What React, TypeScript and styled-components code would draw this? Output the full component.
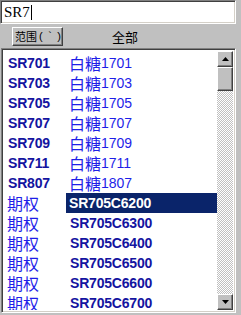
import React from 'react';
import styled, { createGlobalStyle, css } from 'styled-components';

const GlobalStyle = createGlobalStyle`
    html, body {
        margin: 0;
        padding: 0;
        background: #c0c0c0;
        overflow: hidden;
    }
`;

const sunken = css`
    box-sizing: border-box;
    border-style: solid;
    border-width: 1px;
    border-color: #808080 #ffffff #ffffff #808080;
    box-shadow: inset 1px 1px 0 #404040, inset -1px -1px 0 #d4d0c8;
`;

const raised = css`
    box-sizing: border-box;
    border-style: solid;
    border-width: 1px;
    border-color: #ffffff #404040 #404040 #ffffff;
    box-shadow: inset -1px -1px 0 #808080;
    background: #c0c0c0;
`;

const Window = styled.div`
    width: 241px;
    height: 315px;
    background: #c0c0c0;
    display: flex;
    flex-direction: column;
    overflow: hidden;
`;

const SearchBox = styled.div`
    ${sunken};
    width: 236px;
    height: 24px;
    background: #ffffff;
    padding: 0 0 0 3px;
    display: flex;
    align-items: center;
    font-family: "Liberation Serif", serif;
    font-size: 15px;
    color: #000000;
`;

const Caret = styled.span`
    display: inline-block;
    width: 1px;
    height: 15px;
    margin-left: 1px;
    background: #000000;
`;

const Toolbar = styled.div`
    height: 24px;
    display: flex;
    align-items: center;
`;

const RangeButton = styled.div`
    ${raised};
    margin: 1px 0 0 12px;
    width: 51px;
    height: 19px;
    display: flex;
    align-items: center;
    padding-left: 2px;
    white-space: nowrap;
    overflow: visible;
    font-family: "Noto Sans CJK SC", sans-serif;
    font-size: 11px;
    line-height: 1;
    color: #000000;
`;

const Paren = styled.span`
    font-family: "Liberation Sans", sans-serif;
    font-size: 11px;
    letter-spacing: 5.5px;
    margin-left: 2px;
`;

const AllLabel = styled.span`
    margin: 1px 0 0 49px;
    font-family: "Noto Sans CJK SC", sans-serif;
    font-size: 13px;
    color: #000000;
`;

const ListBox = styled.div`
    ${sunken};
    margin-left: 1px;
    width: 235px;
    height: 265px;
    background: #ffffff;
    display: flex;
    padding: 2px;
`;

const Rows = styled.div`
    flex: 1;
    padding-top: 2px;
    overflow: hidden;
`;

const Row = styled.div`
    display: flex;
    height: 20px;
`;

const Cell = styled.div<{ $wide?: boolean; $selected?: boolean }>`
    box-sizing: border-box;
    height: 20px;
    display: flex;
    align-items: center;
    white-space: nowrap;
    ${({ $wide }) => ($wide ? 'flex: 1; padding-left: 3px;' : 'width: 62px; padding-left: 3px;')}
    background: ${({ $selected }) => ($selected ? '#0a246a' : 'transparent')};
`;

const Code = styled.span<{ $selected?: boolean }>`
    margin-left: ${({ $selected }) => ($selected ? '0' : '1px')};
    font-family: "Liberation Sans", Arial, sans-serif;
    font-weight: bold;
    font-size: 14px;
    line-height: 16px;
    letter-spacing: -0.2px;
    color: ${({ $selected }) => ($selected ? '#ffffff' : '#1414a0')};
`;

const Cjk = styled.span`
    font-family: "Noto Sans CJK SC", sans-serif;
    font-size: 16px;
    line-height: 17px;
    color: #1e1ee8;
`;

const Num = styled.span`
    font-family: "Liberation Sans", Arial, sans-serif;
    font-size: 14px;
    line-height: 16px;
    color: #1e1ee8;
`;

const ScrollBar = styled.div`
    width: 16px;
    display: flex;
    flex-direction: column;
`;

const ArrowButton = styled.div`
    ${raised};
    width: 16px;
    height: 16px;
    display: flex;
    align-items: center;
    justify-content: center;
`;

const Thumb = styled.div`
    ${raised};
    width: 16px;
    height: 24px;
`;

const Track = styled.div`
    flex: 1;
    background: repeating-conic-gradient(#c0c0c0 0 25%, #ffffff 0 50%) 0 0 / 2px 2px;
`;

const Arrow = ({ down }: { down?: boolean }) => (
    <svg width="7" height="4" viewBox="0 0 7 4">
        <path d={down ? 'M0 0H7L3.5 4Z' : 'M3.5 0L7 4H0Z'} fill="#000000" />
    </svg>
);

type Item = {
    code: string;
    name?: string;
    num?: string;
    selected?: boolean;
};

const futures: Item[] = [
    { code: 'SR701', name: '白糖', num: '1701' },
    { code: 'SR703', name: '白糖', num: '1703' },
    { code: 'SR705', name: '白糖', num: '1705' },
    { code: 'SR707', name: '白糖', num: '1707' },
    { code: 'SR709', name: '白糖', num: '1709' },
    { code: 'SR711', name: '白糖', num: '1711' },
    { code: 'SR807', name: '白糖', num: '1807' },
];

const options: Item[] = [
    { code: 'SR705C6200', selected: true },
    { code: 'SR705C6300' },
    { code: 'SR705C6400' },
    { code: 'SR705C6500' },
    { code: 'SR705C6600' },
    { code: 'SR705C6700' },
];

const App: React.FC = () => {
    return (
        <Window>
            <GlobalStyle />
            <SearchBox>
                SR7<Caret />
            </SearchBox>
            <Toolbar>
                <RangeButton>
                    范围<Paren>(`)</Paren>
                </RangeButton>
                <AllLabel>全部</AllLabel>
            </Toolbar>
            <ListBox>
                <Rows>
                    {futures.map((item) => (
                        <Row key={item.code}>
                            <Cell>
                                <Code>{item.code}</Code>
                            </Cell>
                            <Cell $wide>
                                <Cjk>{item.name}</Cjk>
                                <Num>{item.num}</Num>
                            </Cell>
                        </Row>
                    ))}
                    {options.map((item) => (
                        <Row key={item.code}>
                            <Cell>
                                <Cjk>期权</Cjk>
                            </Cell>
                            <Cell $wide $selected={item.selected}>
                                <Code $selected={item.selected}>{item.code}</Code>
                            </Cell>
                        </Row>
                    ))}
                </Rows>
                <ScrollBar>
                    <ArrowButton>
                        <Arrow />
                    </ArrowButton>
                    <Thumb />
                    <Track />
                    <ArrowButton>
                        <Arrow down />
                    </ArrowButton>
                </ScrollBar>
            </ListBox>
        </Window>
    );
};

export default App;
